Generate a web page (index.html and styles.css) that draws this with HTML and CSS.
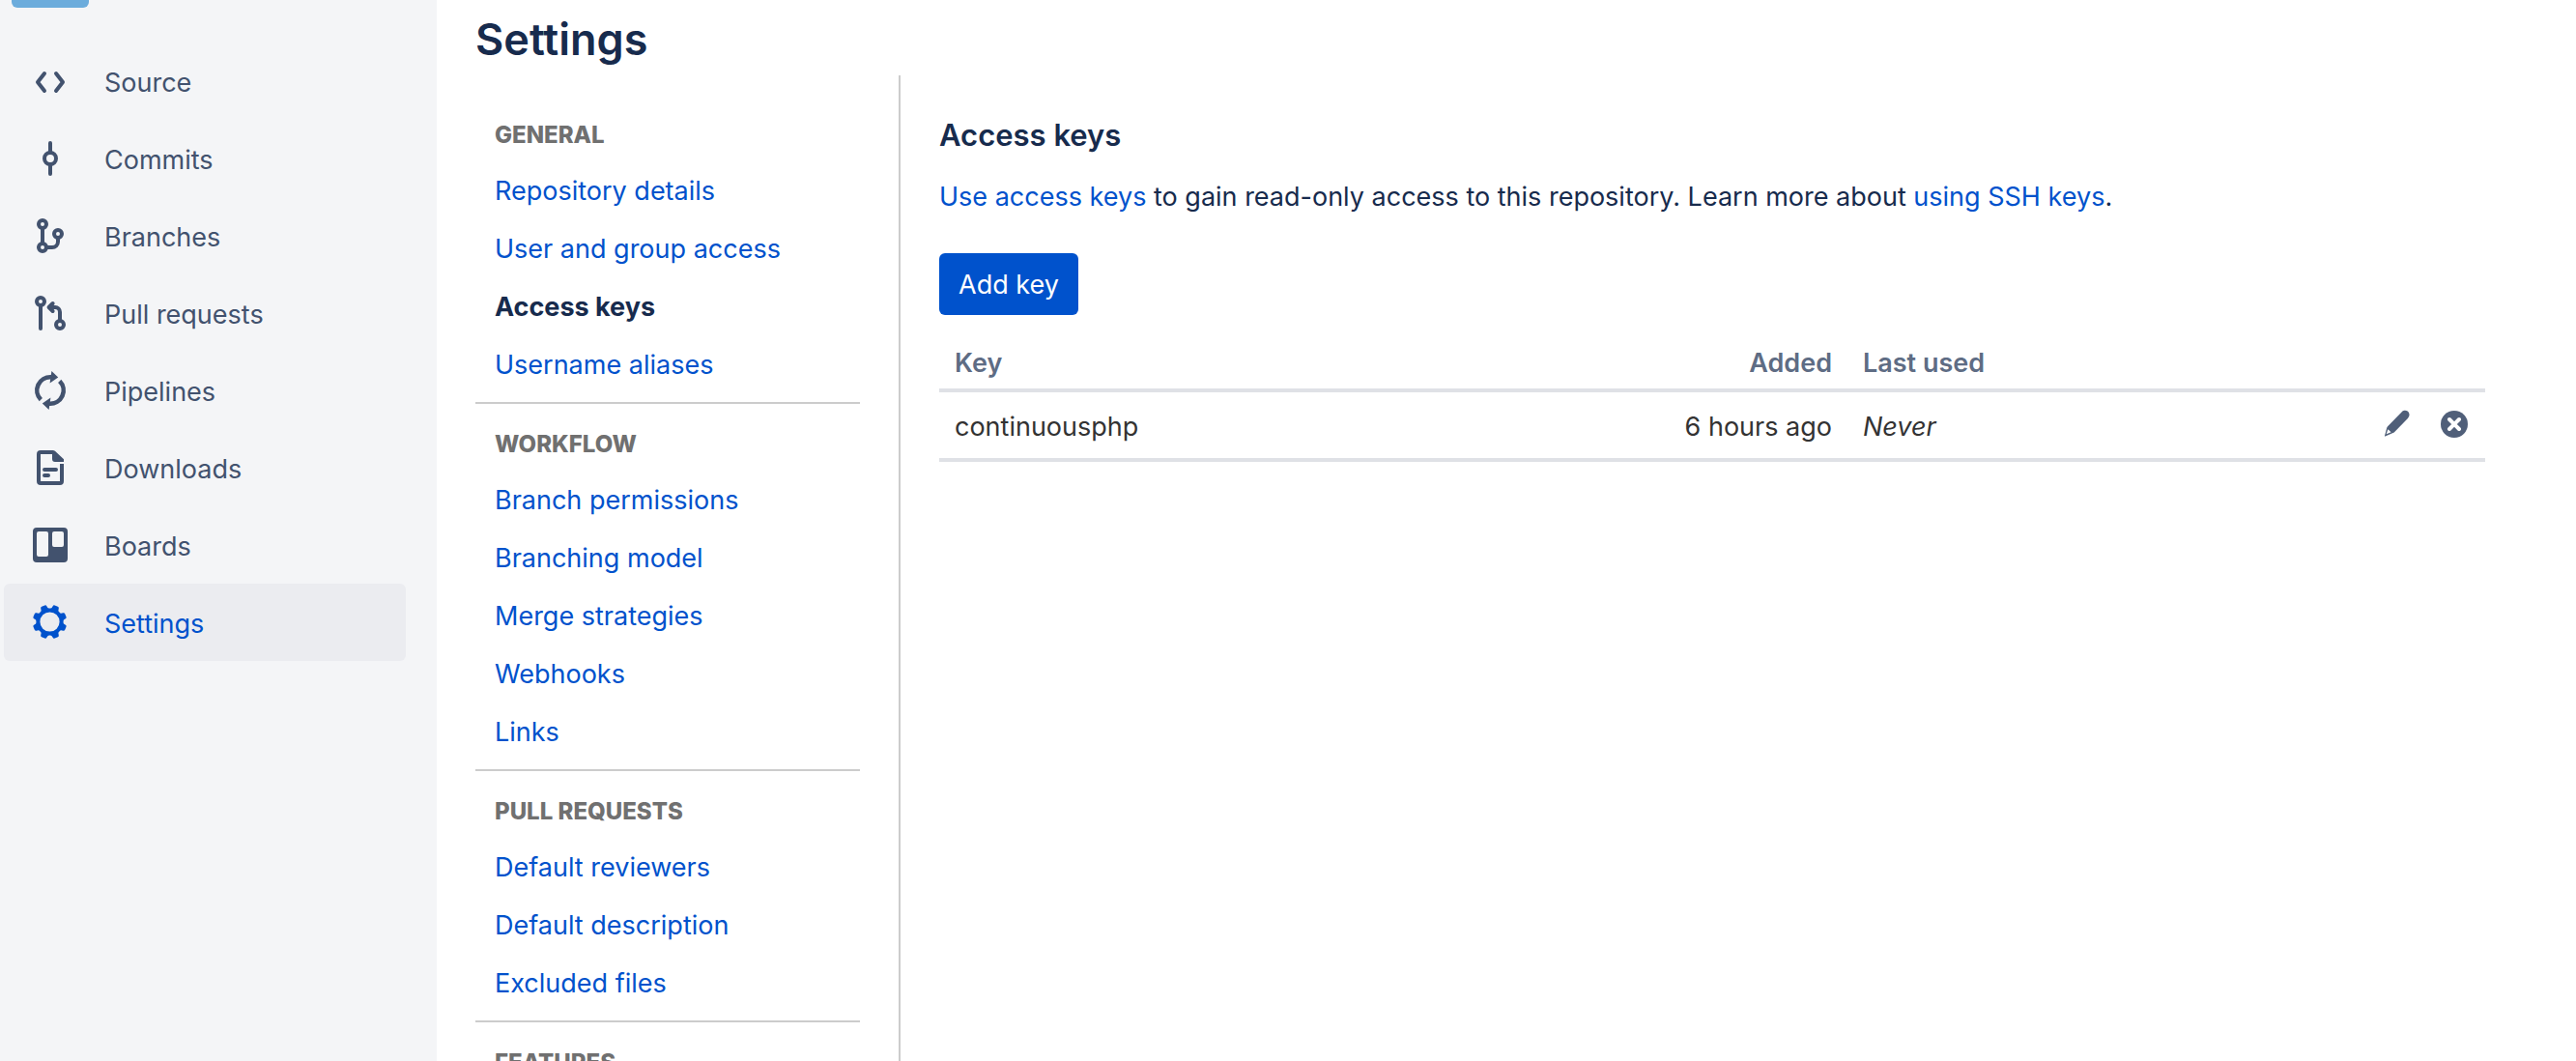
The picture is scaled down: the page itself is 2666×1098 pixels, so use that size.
FILE: index.html
```html
<!DOCTYPE html>
<html lang="en">
<head>
<meta charset="utf-8">
<title>Settings – Access keys</title>
<link rel="stylesheet" href="styles.css">
</head>
<body>
<div class="app">
  <aside class="sidebar">
    <div class="badge-stub"></div>
    <nav class="repo-nav" aria-label="Repository">
      <a class="nav-item" href="#source">
        <svg class="icon" viewBox="0 0 24 24"><path class="line" d="M9 8l-3.500 4.500L9 17M15 8l3.500 4.500L15 17"/></svg>
        <span class="nav-label">Source</span></a>
      <a class="nav-item" href="#commits">
        <svg class="icon" viewBox="0 0 24 24"><circle class="line" cx="12" cy="12" r="3"/><path class="line" d="M12 4v5M12 15v5"/></svg>
        <span class="nav-label">Commits</span></a>
      <a class="nav-item" href="#branches">
        <svg class="icon" viewBox="0 0 24 24"><circle class="line" cx="8" cy="6" r="2"/><circle class="line" cx="8" cy="18" r="2"/><circle class="line" cx="16" cy="11" r="2"/><path class="line" d="M8 8v8M10 18h3a3 3 0 0 0 3-3v-2"/></svg>
        <span class="nav-label">Branches</span></a>
      <a class="nav-item" href="#pull-requests">
        <svg class="icon" viewBox="0 0 24 24"><circle class="line" cx="7" cy="6" r="2"/><circle class="line" cx="17" cy="18" r="2"/><path class="line" d="M7 8v12M17 16v-4.500a2.500 2.500 0 0 0-2.500-2.500H12M13.300 7l-2 2 2 2"/></svg>
        <span class="nav-label">Pull requests</span></a>
      <a class="nav-item" href="#pipelines">
        <svg class="icon" viewBox="0 0 24 24"><g id="turn"><path class="arc" d="M7.150 16.850A6.850 6.850 0 0 1 12.500 5.170"/><path class="solid" d="M12.700 2l3.400 3.300-4.300 3z"/></g><use href="#turn" transform="rotate(180 12 12)"/></svg>
        <span class="nav-label">Pipelines</span></a>
      <a class="nav-item" href="#downloads">
        <svg class="icon" viewBox="0 0 24 24"><path class="solid" d="M7 3h6.300c.5 0 .9.200 1.300.5L19 7.600V9h-4.500A1.500 1.500 0 0 1 13 7.500V5H7v14h10v-9h2v9a2 2 0 0 1-2 2H7a2 2 0 0 1-2-2V5a2 2 0 0 1 2-2z"/><path class="line" d="M9 13h6M9 16h2"/></svg>
        <span class="nav-label">Downloads</span></a>
      <a class="nav-item" href="#boards">
        <svg class="icon" viewBox="0 0 24 24"><path class="solid" fill-rule="evenodd" d="M5 3h14a2 2 0 0 1 2 2v14a2 2 0 0 1-2 2H5a2 2 0 0 1-2-2V5a2 2 0 0 1 2-2zM6 5a1 1 0 0 0-1 1v11a1 1 0 0 0 1 1h4a1 1 0 0 0 1-1V6a1 1 0 0 0-1-1zM14 5a1 1 0 0 0-1 1v6a1 1 0 0 0 1 1h4a1 1 0 0 0 1-1V6a1 1 0 0 0-1-1z"/></svg>
        <span class="nav-label">Boards</span></a>
      <a class="nav-item nav-item-active" href="#settings" aria-current="page">
        <svg class="icon" viewBox="0 0 24 24">
          <defs><path id="tooth" class="solid" d="M9.200 5.700Q10.100 4.800 10.100 3.600Q10.200 2.900 10.900 2.900h1.700q.7 0 .8.700Q13.400 4.800 14.300 5.700z"/></defs>
          <circle class="ring" cx="11.750" cy="11.750" r="6.050"/>
          <use href="#tooth" transform="rotate(22.500 11.750 11.750)"/><use href="#tooth" transform="rotate(67.500 11.750 11.750)"/><use href="#tooth" transform="rotate(112.500 11.750 11.750)"/><use href="#tooth" transform="rotate(157.500 11.750 11.750)"/><use href="#tooth" transform="rotate(202.500 11.750 11.750)"/><use href="#tooth" transform="rotate(247.500 11.750 11.750)"/><use href="#tooth" transform="rotate(292.500 11.750 11.750)"/><use href="#tooth" transform="rotate(337.500 11.750 11.750)"/></svg>
        <span class="nav-label">Settings</span></a>
    </nav>
  </aside>

  <main class="page">
    <h1 class="page-title">Settings</h1>
    <div class="columns">
      <nav class="settings-nav" aria-label="Settings">
        <section class="group">
          <h2 class="group-title">General</h2>
          <a class="group-link" href="#details">Repository details</a>
          <a class="group-link" href="#access">User and group access</a>
          <a class="group-link group-link-active" href="#keys" aria-current="page">Access keys</a>
          <a class="group-link" href="#aliases">Username aliases</a>
        </section>
        <section class="group">
          <h2 class="group-title">Workflow</h2>
          <a class="group-link" href="#permissions">Branch permissions</a>
          <a class="group-link" href="#model">Branching model</a>
          <a class="group-link" href="#merge">Merge strategies</a>
          <a class="group-link" href="#webhooks">Webhooks</a>
          <a class="group-link" href="#links">Links</a>
        </section>
        <section class="group">
          <h2 class="group-title">Pull requests</h2>
          <a class="group-link" href="#reviewers">Default reviewers</a>
          <a class="group-link" href="#description">Default description</a>
          <a class="group-link" href="#excluded">Excluded files</a>
        </section>
        <section class="group">
          <h2 class="group-title">Features</h2>
        </section>
      </nav>

      <section class="content">
        <h2 class="content-title">Access keys</h2>
        <p class="intro"><a href="#use-keys">Use access keys</a> to gain read-only access to this repository. Learn more about <a href="#ssh">using SSH keys</a>.</p>
        <button class="add-button" type="button">Add key</button>
        <table class="keys">
          <thead>
            <tr>
              <th class="col-key" scope="col">Key</th>
              <th class="col-added" scope="col">Added</th>
              <th class="col-used" scope="col">Last used</th>
              <td class="col-actions"></td>
            </tr>
          </thead>
          <tbody>
            <tr>
              <td>continuousphp</td>
              <td class="col-added">6 hours ago</td>
              <td><em>Never</em></td>
              <td class="cell-actions">
                <div class="actions">
                  <button class="icon-button" type="button" aria-label="Edit key">
                    <svg class="small-icon" viewBox="0 0 32 32"><path d="M21.500 3.600a4.400 4.400 0 0 1 7.200 5.200q-.3.600-.8 1.100L14 24.200q-.6.600-1.400.9L4.600 28.500a.4.400 0 0 1-.6-.5L6.300 19.600q.2-.8.800-1.400z" fill="currentColor"/><path d="M7.400 21.300l-1.700 5 4.900-2z" fill="#fff"/></svg>
                  </button>
                  <button class="icon-button" type="button" aria-label="Delete key">
                    <svg class="small-icon" viewBox="0 0 32 32"><circle cx="16" cy="16" r="14" fill="currentColor"/><path d="M11 11l10 10M21 11L11 21" stroke="#fff" stroke-width="4" stroke-linecap="round"/></svg>
                  </button>
                </div>
              </td>
            </tr>
          </tbody>
        </table>
      </section>
    </div>
  </main>
</div>
</body>
</html>
```
FILE: styles.css
```css
* {
  box-sizing: border-box;
}

body {
  margin: 0;
  background: #fff;
  color: #172b4d;
  font: 27px/40px Inter, "Liberation Sans", sans-serif;
}

a {
  color: #0052cc;
  text-decoration: none;
}

h1,
h2,
p {
  margin: 0;
}

.app {
  display: flex;
  height: 100vh;
  overflow: hidden;
}

/* Repository sidebar */
.sidebar {
  flex: 0 0 452px;
  padding: 0 32px 0 4px;
  background: #f4f5f7;
}

.badge-stub {
  width: 80px;
  height: 8px;
  margin: 0 8px 36px;
  border-radius: 0 0 6px 6px;
  background: #6cacdc;
}

.nav-item {
  display: flex;
  align-items: center;
  gap: 32px;
  height: 80px;
  padding: 0 24px;
  border-radius: 6px;
  color: #42526e;
}

.nav-item-active {
  background: #ebecf0;
  color: #0052cc;
}

.nav-label {
  padding-top: 4px;
}

.icon {
  width: 48px;
  height: 48px;
}

.line {
  fill: none;
  stroke: currentColor;
  stroke-width: 2;
  stroke-linecap: round;
  stroke-linejoin: round;
}

.arc,
.ring {
  fill: none;
  stroke: currentColor;
  stroke-width: 2.300;
}

.ring {
  stroke-width: 2;
}

.solid {
  fill: currentColor;
}

/* Page */
.page {
  flex: 1;
  min-width: 0;
  padding: 0 94px 0 40px;
}

.page-title {
  height: 78px;
  padding-top: 12px;
  font-size: 45px;
  font-weight: 600;
  line-height: 58px;
}

.columns {
  display: flex;
}

.settings-nav {
  flex: 0 0 440px;
  padding: 20px 40px 0 0;
  border-right: 2px solid #ccc;
}

.group {
  padding: 22px 20px 8px;
  border-bottom: 2px solid #ccc;
}

.group-title {
  margin-bottom: 8px;
  color: #707070;
  font-size: 24px;
  font-weight: 800;
  line-height: 40px;
  text-transform: uppercase;
}

.group-link {
  display: block;
  line-height: 60px;
}

.group-link-active {
  color: #172b4d;
  font-weight: 700;
}

/* Access keys */
.content {
  flex: 1;
  min-width: 0;
  padding: 42px 0 0 40px;
}

.content-title {
  margin-bottom: 24px;
  font-size: 31px;
  font-weight: 600;
  line-height: 40px;
}

.intro {
  margin-bottom: 38px;
}

.add-button {
  display: block;
  height: 64px;
  margin-bottom: 20px;
  padding: 2px 20px 0;
  border: 0;
  border-radius: 6px;
  background: #0052cc;
  color: #fff;
  font: inherit;
}

.keys {
  width: 100%;
  border-collapse: collapse;
  table-layout: fixed;
  color: #333;
}

.keys th,
.keys td {
  padding: 16px 16px 12px;
  text-align: left;
}

.keys thead th,
.keys thead td {
  padding: 10px 16px 6px;
  color: #5e6c84;
  font-weight: 600;
}

.keys tr {
  border-bottom: 4px solid #dfe1e6;
}

.keys .cell-actions {
  padding: 12px 16px 14px;
}

.keys .col-added {
  width: 280px;
  text-align: right;
}

.col-used {
  width: 400px;
}

.col-actions {
  width: 260px;
}

.actions {
  display: flex;
  justify-content: flex-end;
  gap: 28px;
}

.icon-button {
  display: flex;
  padding: 0;
  border: 0;
  background: none;
  color: #505f79;
}

.small-icon {
  width: 32px;
  height: 32px;
}
```
